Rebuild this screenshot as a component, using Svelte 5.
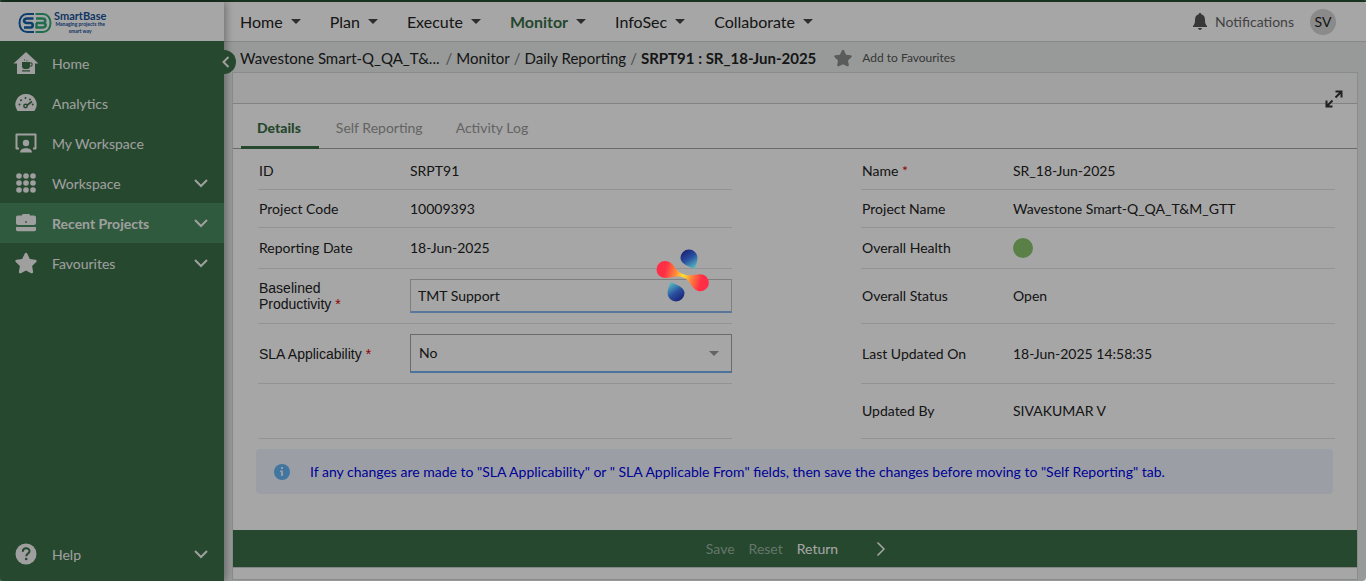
<script>
  const sideItems = [
    { label: 'Home', icon: 'home' },
    { label: 'Analytics', icon: 'gauge' },
    { label: 'My Workspace', icon: 'desk' },
    { label: 'Workspace', icon: 'grid', open: true },
    { label: 'Recent Projects', icon: 'case', open: true, active: true },
    { label: 'Favourites', icon: 'star', open: true }
  ];
  const menus = ['Home', 'Plan', 'Execute', 'Monitor', 'InfoSec', 'Collaborate'];
  const crumbs = ['Wavestone Smart-Q_QA_T&...', 'Monitor', 'Daily Reporting'];
  const tabs = ['Details', 'Self Reporting', 'Activity Log'];
  const dots = [4, 11, 18];
  const starPath = 'M11 .8c.6 0 1 .3 1.3.9l2.5 5.2 5.6.8c1.300.2 1.700 1.400.8 2.300l-4.100 4 1 5.700c.2 1.200-1 2-2 1.500L11 18.500l-5.100 2.700c-1 .5-2.200-.3-2-1.500l1-5.700-4.100-4c-.9-.9-.5-2.100.8-2.300l5.600-.8 2.500-5.200c.3-.6.7-.9 1.300-.9z';
</script>

{#snippet chevron()}
  <svg class="chev" viewBox="0 0 14 9" width="14" height="9" aria-hidden="true"><path d="M1 1l6 6 6-6" fill="none" stroke="currentColor" stroke-width="2" /></svg>
{/snippet}

{#snippet icon(name)}
  {#if name === 'home'}
    <svg viewBox="0 0 26 24" width="26" height="24"><path fill="currentColor" d="M13 1l12.500 11.500H22V23H4V12.500H.5z" /><path fill="var(--green)" d="M9 11h8v4c0 2-1 3-2.500 3h-3C10 18 9 17 9 15zM9 19.300h8v1.200H9z" /><path d="M17 12h2v3h-2" fill="none" stroke="var(--green)" stroke-width="1" /><path fill="var(--green)" d="M11 8.500h1v1h-1zM13.500 9.200h1v1h-1z" /></svg>
  {:else if name === 'gauge'}
    <svg viewBox="0 0 22 22" width="22" height="22"><path fill="currentColor" d="M11 2a10.500 10.500 0 0 1 8.800 16.400c-.4.500-.8.600-1.300.6h-15c-.5 0-.9-.1-1.300-.6A10.500 10.500 0 0 1 11 2z" /><g fill="var(--green)"><circle cx="4.500" cy="12.500" r="1" /><circle cx="6" cy="8.300" r="1" /><circle cx="10.500" cy="6" r="1" /><circle cx="15" cy="7.500" r="1" /><circle cx="17.700" cy="12.500" r="1" /><circle cx="10.500" cy="14" r="2.400" /></g><path d="M11 14l6-4.500" stroke="var(--green)" stroke-width="1.600" /><circle cx="10.500" cy="14" r=".9" fill="currentColor" /></svg>
  {:else if name === 'desk'}
    <svg viewBox="0 0 22 20" width="22" height="20"><path d="M4 15.500H1.500V1.500h19v14H18" fill="none" stroke="currentColor" stroke-width="2" stroke-linejoin="round" /><circle cx="11" cy="10" r="3.200" fill="currentColor" /><path d="M5 19.500c.3-3 2.700-4.200 6-4.200s5.700 1.200 6 4.200z" fill="currentColor" /></svg>
  {:else if name === 'grid'}
    <svg viewBox="0 0 22 22" width="22" height="22" fill="currentColor">{#each dots as x}{#each dots as y}<circle cx={x} cy={y} r="2.800" />{/each}{/each}</svg>
  {:else if name === 'case'}
    <svg viewBox="0 0 20 18" width="20" height="18" fill="currentColor"><path d="M6 1.500C6 .6 6.500 0 7.300 0h5.400c.8 0 1.300.6 1.300 1.500h4c1.200 0 2 .8 2 2V9c0 1.200-.8 2-2 2H2c-1.200 0-2-.8-2-2V3.500c0-1.200.8-2 2-2zM0 13h20v2.500c0 1-.8 1.700-1.700 1.700H1.700C.8 17.200 0 16.500 0 15.500z" /><circle cx="10" cy="8" r=".9" fill="var(--active)" /></svg>
  {:else if name === 'star'}
    <svg viewBox="0 0 22 22" width="22" height="22" fill="currentColor"><path d={starPath} /></svg>
  {/if}
{/snippet}

<div class="app">
  <aside class="sidebar">
    <a class="logo" href="#home" aria-label="SmartBase">
      <svg viewBox="0 0 34 22" width="34" height="22" fill="none" aria-hidden="true">
        <path d="M16 2H9C4.500 2 1.500 6 1.500 11s3 9 7.500 9h7" stroke="#1460aa" stroke-width="2" />
        <path d="M15.500 6.500H9.500C5 6.500 5 11 9 11h3.500c3 0 3 4.500 0 4.500H6" stroke="#1460aa" stroke-width="2.600" />
        <path d="M17.500 2H25c4.500 0 7.500 4 7.500 9s-3 9-7.500 9h-7.500" stroke="#32a978" stroke-width="2" />
        <path d="M18 6.500h6c4.500 0 4.500 4.500 0 4.500h-6 6c5 0 5 4.500 0 4.500h-5.500V11" stroke="#32a978" stroke-width="2.400" />
      </svg>
      <span class="brand"><b>SmartBase</b><small>Managing projects the<br />smart way</small></span>
    </a>
    <button class="collapse" aria-label="Collapse menu"><svg viewBox="0 0 8 12" width="8" height="12"><path d="M6.500 1L1.500 6l5 5" fill="none" stroke="currentColor" stroke-width="2" /></svg></button>
    <nav class="side">
      {#each sideItems as item}
        <a href="#side" class:active={item.active}>
          <span class="ico">{@render icon(item.icon)}</span><span class="grow">{item.label}</span>
          {#if item.open}{@render chevron()}{/if}
        </a>
      {/each}
      <a href="#help" class="help">
        <span class="ico"><svg viewBox="0 0 22 22" width="22" height="22"><circle cx="11" cy="11" r="10.500" fill="currentColor" /><path d="M7.800 8.700c0-4.500 6.700-4.300 6.700-.5 0 2.400-3.300 2.400-3.300 5" fill="none" stroke="var(--green)" stroke-width="2" /><circle cx="11.200" cy="16" r="1.300" fill="var(--green)" /></svg></span>
        <span class="grow">Help</span>{@render chevron()}
      </a>
    </nav>
  </aside>

  <div class="main">
    <header class="top">
      <nav class="menu">
        {#each menus as m}
          <button class:current={m === 'Monitor'}>{m}<svg viewBox="0 0 10 5" width="10" height="5" aria-hidden="true"><path d="M0 0h10L5 5z" fill="#444" /></svg></button>
        {/each}
      </nav>
      <button class="notify"><svg viewBox="0 0 14 17" width="14" height="17" aria-hidden="true"><path fill="#555" d="M7 0c.8 0 1.200.5 1.200 1.300C11 2 12 4 12 7c0 3 .5 4.500 2 6v1H0v-1c1.500-1.500 2-3 2-6 0-3 1-5 3.800-5.700C5.800.5 6.200 0 7 0zM5 15h4c-.3 1.200-1 2-2 2s-1.700-.8-2-2z" /></svg>Notifications</button>
      <button class="avatar">SV</button>
    </header>

    <div class="crumbs">
      {#each crumbs as c, i}<a href="#crumb" class:wide={i === 0}>{c}</a><span class="sep">/</span>{/each}
      <strong>SRPT91 : SR_18-Jun-2025</strong>
      <button class="fav"><svg viewBox="0 0 22 22" width="18" height="18" fill="#8c8c8c" aria-hidden="true"><path d={starPath} /></svg>Add to Favourites</button>
    </div>

    <main class="card">
      <div class="cardhead"><button aria-label="Expand"><svg viewBox="0 0 18 18" width="18" height="18"><path d="M10.500 7.500L16 2M10.500 1.500h6v6M7.500 10.500L2 16M1.500 10.500v6h6" fill="none" stroke="#333" stroke-width="2" /></svg></button></div>
      <div class="tabs" role="tablist">
        {#each tabs as t, i}<button role="tab" aria-selected={i === 0} class:on={i === 0}>{t}</button>{/each}
      </div>
      <form class="fields">
        <dl>
          <div class="row r1"><dt>ID</dt><dd>SRPT91</dd></div>
          <div class="row r2"><dt>Project Code</dt><dd>10009393</dd></div>
          <div class="row r3"><dt>Reporting Date</dt><dd>18-Jun-2025</dd></div>
          <div class="row r4 plain"><dt><label for="base">Baselined Productivity <i>*</i></label></dt><dd><input id="base" value="TMT Support" /></dd></div>
          <div class="row r5 plain"><dt><label for="sla">SLA Applicability <i>*</i></label></dt><dd class="pick"><select id="sla"><option>No</option><option>Yes</option></select><svg viewBox="0 0 10 5" width="10" height="5" aria-hidden="true"><path d="M0 0h10L5 5z" fill="#999" /></svg></dd></div>
          <div class="row r4"></div>
        </dl>
        <dl>
          <div class="row r1"><dt>Name <i>*</i></dt><dd>SR_18-Jun-2025</dd></div>
          <div class="row r2"><dt>Project Name</dt><dd>Wavestone Smart-Q_QA_T&amp;M_GTT</dd></div>
          <div class="row r3"><dt>Overall Health</dt><dd><span class="health"></span></dd></div>
          <div class="row r4"><dt>Overall Status</dt><dd>Open</dd></div>
          <div class="row r5"><dt>Last Updated On</dt><dd>18-Jun-2025 14:58:35</dd></div>
          <div class="row r4"><dt>Updated By</dt><dd>SIVAKUMAR V</dd></div>
        </dl>
      </form>
      <p class="info"><svg viewBox="0 0 16 16" width="16" height="16" aria-hidden="true"><circle cx="8" cy="8" r="8" fill="#64b5f6" /><path d="M7 3h2v2H7zM6 6.500h3V12H7V8H6z" fill="#e8f0fc" /></svg><span>If any changes are made to "SLA Applicability" or " SLA Applicable From" fields, then save the changes before moving to "Self Reporting" tab.</span></p>
      <footer>
        <button disabled>Save</button><button disabled>Reset</button><button>Return</button>
        <button class="next" aria-label="Next"><svg viewBox="0 0 10 16" width="10" height="16"><path d="M1.500 1.500L8 8l-6.500 6.500" fill="none" stroke="currentColor" stroke-width="1.500" /></svg></button>
      </footer>
    </main>
  </div>
</div>

<div class="overlay" role="status" aria-label="Loading">
  <svg viewBox="0 0 54 54" width="54" height="54">
    <defs>
      <linearGradient id="warm" gradientUnits="userSpaceOnUse" x1="0" y1="20" x2="54" y2="34"><stop offset=".16" stop-color="#ff2d45" /><stop offset=".36" stop-color="#ff8a3c" /><stop offset=".5" stop-color="#ffe52f" /><stop offset=".64" stop-color="#ff8a3c" /><stop offset=".84" stop-color="#ff2d45" /></linearGradient>
      <linearGradient id="cool" x1=".15" y1="0" x2=".75" y2="1"><stop offset=".1" stop-color="#1b2678" /><stop offset=".5" stop-color="#2a4f9f" /><stop offset="1" stop-color="#55bcc2" /></linearGradient>
    </defs>
    <path fill="url(#warm)" d="M9 12c5 0 7.500 3 10 6.500 3 4.500 6.500 6.500 11 7.500 5.500 1 9-.5 14-.7a8.500 8.500 0 1 1-4.500 15.500c-3.500-2.300-4.500-5.800-7.500-9.300-3-3.200-6.500-4.200-10.500-4-3.500.2-7.500 1.500-12.500 1.500A8.500 8.500 0 0 1 9 12z" />
    <path id="drop" fill="url(#cool)" d="M33 .5a8.500 8.500 0 0 1 8.500 8.500c0 4-2 7-3 11-5-2.300-14-5-14-11A8.500 8.500 0 0 1 33 .5z" />
    <use href="#drop" transform="rotate(180 26.500 26.500)" />
  </svg>
</div>

<style>
  :global(body) { margin: 0; background: #fff; }
  .app { --green: #3a6f48; --active: #498b5e; display: flex; min-height: 100vh; box-sizing: border-box; border-top: 2px solid #254c33; background: #e8edeb; font: 14px/20px Lato, sans-serif; color: #222; }
  button { border: 0; padding: 0; background: none; font: inherit; color: inherit; }
  a { color: inherit; text-decoration: none; }
  svg { flex: none; display: block; }
  .sidebar { position: relative; z-index: 1; width: 224px; flex: none; display: flex; flex-direction: column; background: var(--green); color: #f5f5f5; box-shadow: 2px 0 8px #0005; }
  .logo { height: 39px; display: flex; align-items: center; gap: 2px; padding: 2px 0 0 18px; box-sizing: border-box; background: #fff; color: #17539a; }
  .brand { display: flex; flex-direction: column; }
  .brand b { font-size: 11px; line-height: 11px; }
  .brand small { font-size: 5px; line-height: 7px; font-weight: 700; text-align: center; }
  .collapse { position: absolute; z-index: -1; left: 212px; top: 48px; width: 24px; height: 24px; border-radius: 12px; background: var(--green); display: grid; place-items: center; padding-left: 4px; }
  .side { flex: 1; display: flex; flex-direction: column; padding: 2px 0 7px; }
  .side a { height: 40px; display: flex; align-items: center; padding: 0 16px 0 12px; }
  .side a.active { background: var(--active); font-weight: 700; }
  .side .help { margin-top: auto; }
  .ico { width: 28px; margin-right: 12px; display: grid; place-items: center; }
  .grow { flex: 1; padding-top: 1px; }
  .main { flex: 1; min-width: 0; display: flex; flex-direction: column; }
  .top { height: 39px; display: flex; align-items: center; padding: 0 30px 0 16px; background: #fff; border-bottom: 1px solid #d0d0d0; }
  .menu { flex: 1; display: flex; gap: 29px; font-size: 16px; }
  .menu button { display: flex; align-items: center; gap: 8px; }
  .menu .current { color: var(--green); font-weight: 700; }
  .notify { display: flex; align-items: center; gap: 8px; color: #666; margin-right: 16px; }
  .avatar { width: 26px; height: 26px; border-radius: 13px; background: #d4d4d4; }
  .crumbs { height: 30px; display: flex; align-items: center; gap: 4px; padding: 2px 16px 0; box-sizing: border-box; font-size: 15px; white-space: nowrap; }
  .crumbs .wide { margin-right: 2px; }
  .sep { color: #777; }
  .fav { display: flex; align-items: center; gap: 10px; margin-left: 14px; font-size: 12px; color: #555; }
  .card { flex: 1; margin: 0 8px 1px; border: 1px solid #d5d8d7; background: #fff; }
  .cardhead { height: 30px; display: flex; justify-content: flex-end; padding: 0 14px; background: #f8f8f8; border-bottom: 1px solid #c8c8c8; }
  .cardhead button { align-self: flex-end; margin-bottom: -5px; z-index: 1; }
  .tabs { display: flex; gap: 1px; padding-left: 8px; height: 44px; border-bottom: 1px solid #a5a5a5; }
  .tabs button { height: 45px; padding: 5px 16px 0; box-sizing: border-box; border-bottom: 3px solid transparent; color: #999; }
  .tabs .on { color: var(--green); font-weight: 900; border-color: var(--green); padding-right: 18px; }
  .fields { display: grid; grid-template-columns: 1fr 1fr; gap: 129px; padding: 0 22px 0 25px; }
  dl, dd { margin: 0; }
  .row { display: flex; align-items: center; border-bottom: 1px solid #e2e2e2; }
  .r1 { height: 37px; padding-top: 3px; } .r2 { height: 37px; } .r3 { height: 40px; } .r4 { height: 54px; } .r5 { height: 59px; }
  dt { width: 152px; flex: none; padding: 0 40px 0 1px; box-sizing: border-box; white-space: nowrap; }
  dd { flex: 1; min-width: 0; }
  i { color: #e00000; font-style: normal; }
  .plain dt { font: 14px/16px "Liberation Sans", sans-serif; white-space: normal; padding-right: 30px; }
  .plain + .plain dt { white-space: nowrap; }
  input, select { width: 100%; height: 34px; display: block; box-sizing: border-box; padding: 0 7px; border: 1px solid #c4c4c4; border-bottom: 2px solid #86b9ef; border-radius: 0; background: #fff; font: inherit; color: inherit; outline: 0; }
  select { appearance: none; height: 39px; padding: 0 8px; border-color: #a5a5a5 #a5a5a5 #73b1ee; }
  .pick { display: grid; align-items: center; }
  .pick > * { grid-area: 1 / 1; }
  .pick svg { justify-self: end; margin-right: 13px; pointer-events: none; }
  .health { display: block; width: 20px; height: 20px; border-radius: 10px; background: #8ac46e; }
  .info { margin: 10px 24px 36px 23px; min-height: 45px; display: flex; align-items: center; gap: 20px; padding: 0 18px; box-sizing: border-box; border-radius: 4px; background: #eef4fd; color: #0000e8; }
  footer { height: 37px; display: flex; align-items: center; justify-content: center; gap: 14px; padding-left: 2px; border-bottom: 1px solid #d0d0d0; background: var(--green); color: #fff; }
  footer button:disabled { color: #9cb5a3; }
  .next { margin-left: 24px; }
  .overlay { position: fixed; inset: 0; z-index: 5; display: grid; place-items: center; padding-bottom: 30px; background: rgb(0 0 0 / .35); border-radius: 4px; }
</style>
